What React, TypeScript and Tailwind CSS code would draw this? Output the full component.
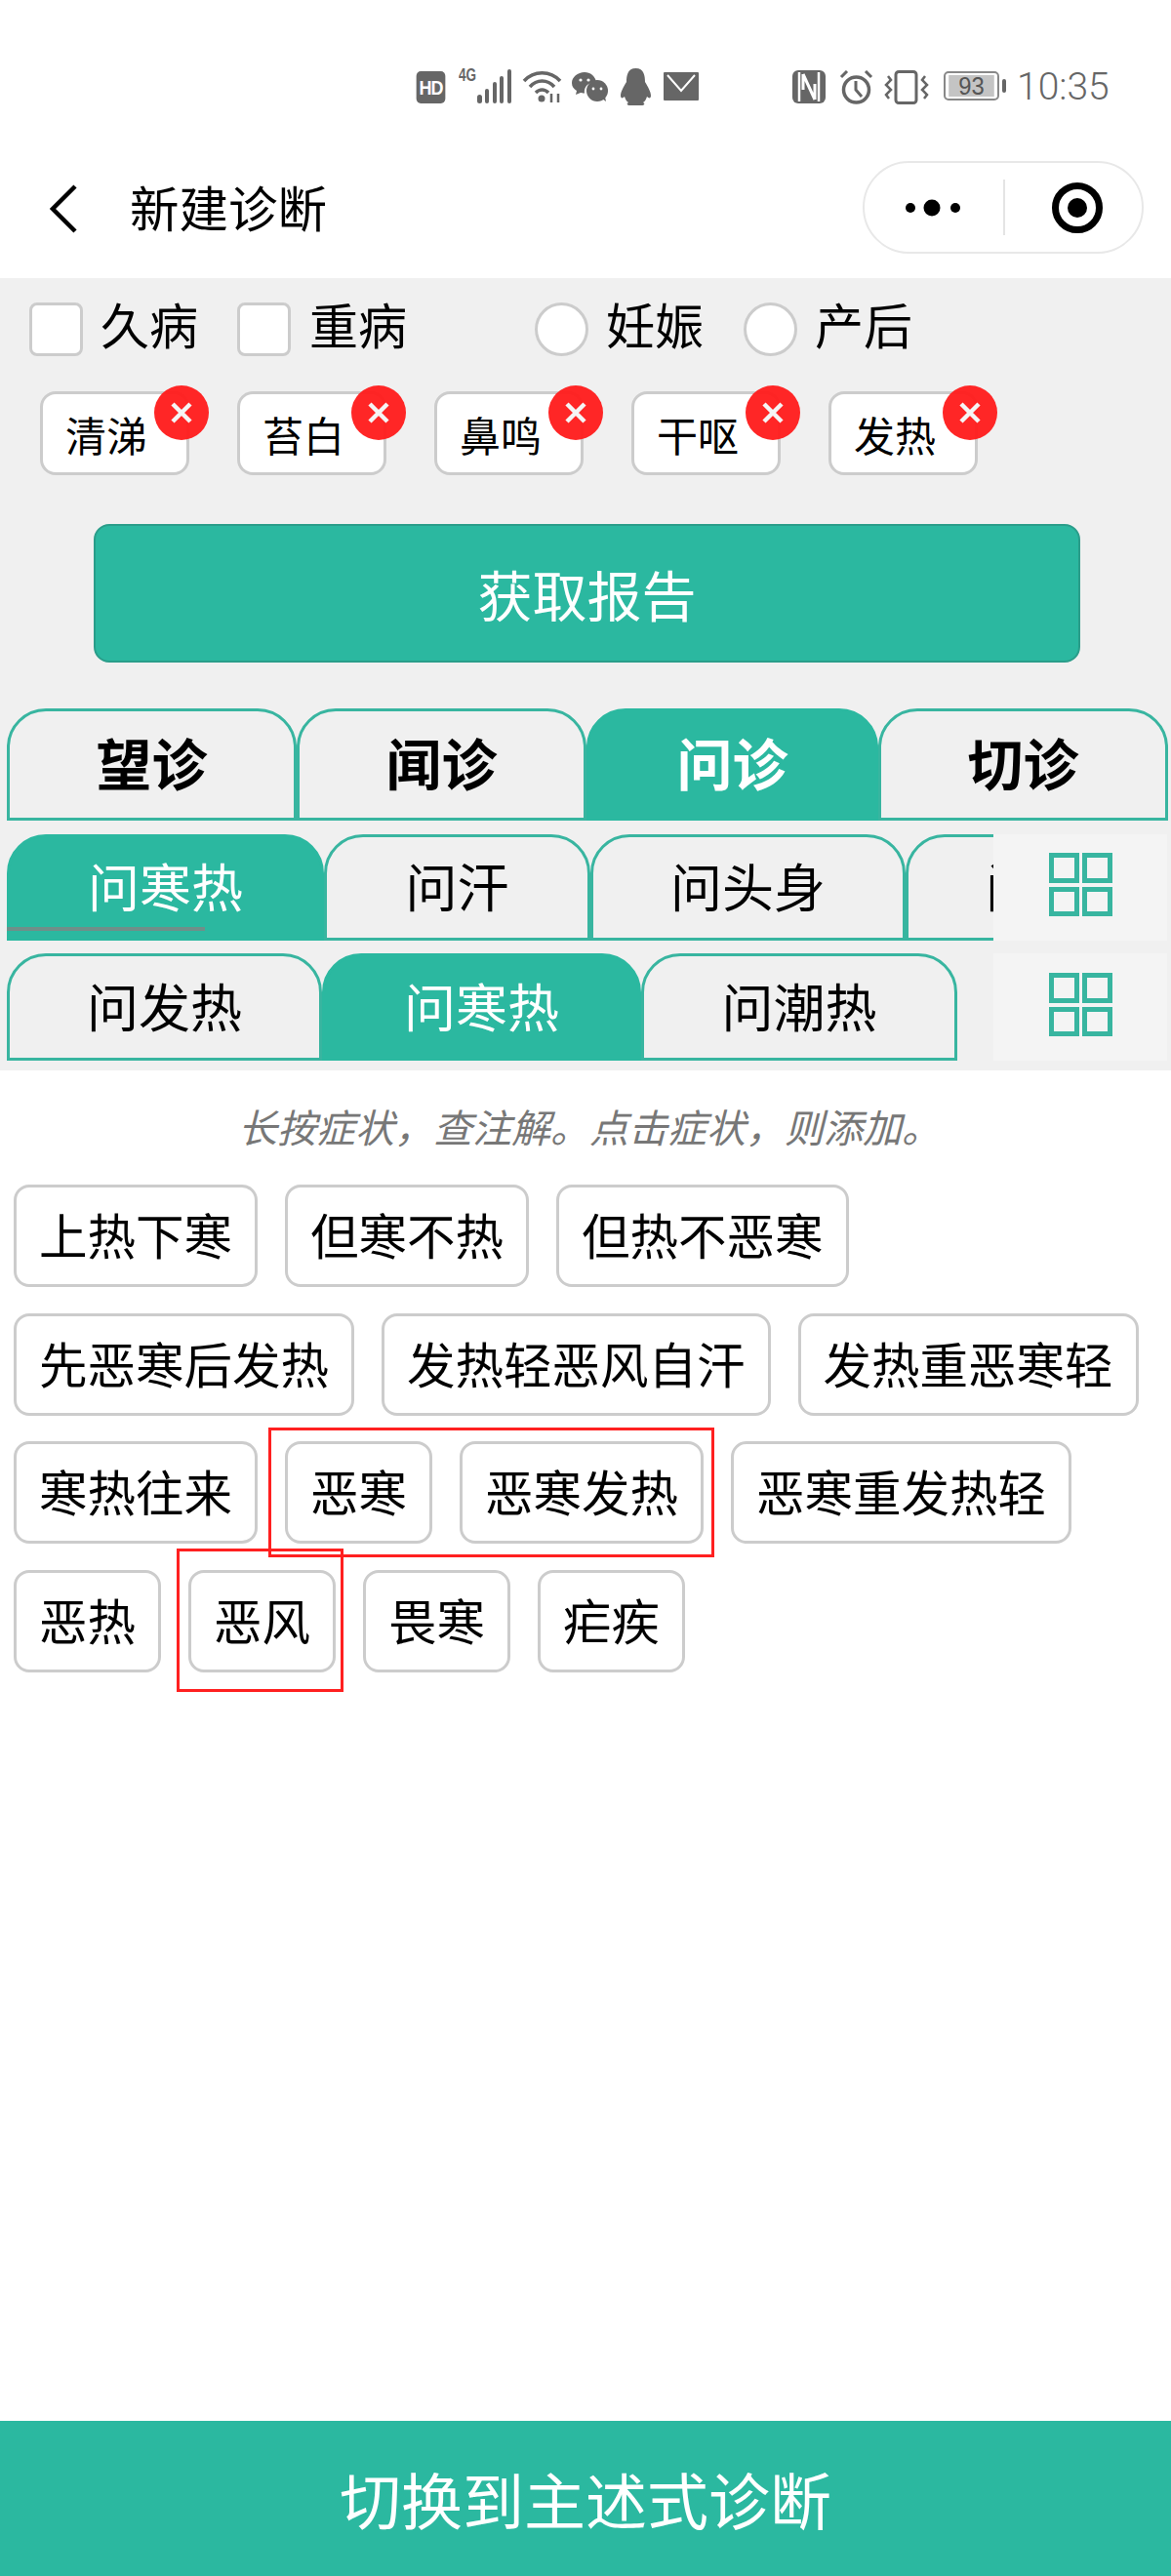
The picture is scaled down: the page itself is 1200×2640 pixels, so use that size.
import React from "react";

function Tab({ label, active, bold, w }: { label: string; active?: boolean; bold?: boolean; w: string }) {
  return (
    <div
      className={`${w} h-full shrink-0 flex items-center justify-center border-[3px] rounded-t-[40px] whitespace-nowrap ${
        active ? "bg-[#2bb8a0] border-[#2bb8a0] text-white" : "border-[#38b5a0] text-black"
      } ${bold ? "font-bold text-[57px] pb-[5px]" : "text-[53px] pb-[3px]"}`}
    >
      {label}
    </div>
  );
}

function GridIcon() {
  return (
    <div className="w-[178px] h-full bg-[#f4f4f4] flex items-center justify-center shrink-0 pb-[6px]">
      <svg width="65" height="65" viewBox="0 0 65 65" fill="none" stroke="#38b5a0" strokeWidth="5">
        <rect x="2.5" y="2.5" width="26" height="26" />
        <rect x="36.5" y="2.5" width="26" height="26" />
        <rect x="2.5" y="37.5" width="26" height="25" />
        <rect x="36.5" y="37.5" width="26" height="25" />
      </svg>
    </div>
  );
}

function Chip({ label }: { label: string }) {
  return (
    <div className="relative w-[153px] h-[86px] bg-white border-[3px] border-[#cccccc] rounded-[16px] flex items-center pl-[23px] text-[42px] text-black">
      {label}
      <div className="absolute left-[114px] top-[-9px] w-[56px] h-[56px] rounded-full bg-[#ff1a1a]/95 flex items-center justify-center">
        <svg width="24" height="24" viewBox="0 0 24 24" stroke="#f5f5f5" strokeWidth="4.5">
          <path d="M3 3 L21 21 M21 3 L3 21" />
        </svg>
      </div>
    </div>
  );
}

function Sym({ label }: { label: string }) {
  return (
    <div className="h-[105px] px-[23px] pb-[2px] bg-white border-[3px] border-[#cccccc] rounded-[16px] flex items-center text-[49.500px] text-black whitespace-nowrap">
      {label}
    </div>
  );
}

function StatusBar() {
  const c = "#666666";
  return (
    <div className="h-[145px] pt-[70px] pl-[425px] flex items-start text-[#666666]">
      <div className="mt-[3px] w-[33px] h-[33px] rounded-[5px] bg-[#666666] text-white text-[20px] font-bold flex items-center justify-center font-['Liberation_Sans'] tracking-[-1px] scale-x-90">
        HD
      </div>
      <div className="ml-[12px] flex items-start w-[55px] relative h-[36px]">
        <span className="text-[18px] font-bold leading-[15px] font-['Liberation_Sans'] scale-x-75 origin-left">4G</span>
        <svg className="absolute left-[19px] top-[1px]" width="36" height="35" viewBox="0 0 36 35" fill={c}>
          <rect x="0" y="26" width="5" height="9" rx="2.5" />
          <rect x="8" y="20" width="4" height="15" rx="2" />
          <rect x="16" y="13" width="4" height="22" rx="2" />
          <rect x="23" y="7" width="4" height="28" rx="2" />
          <rect x="31" y="0" width="4" height="35" rx="2" />
        </svg>
      </div>
      <svg className="ml-[10px] mt-[2px]" width="42" height="34" viewBox="0 0 42 34" fill="none" stroke={c} strokeWidth="3.5">
        <path d="M2 11 C12 0 29 0 39 11" />
        <path d="M8 17 C15 9 26 9 33 17" />
        <path d="M14 23 C18 19 23 19 27 23" />
        <circle cx="20" cy="29" r="3.5" fill={c} stroke="none" />
        <path d="M30 24 V33 M37 24 V33" strokeWidth="2.5" />
      </svg>
      <svg className="ml-[9px] mt-[4px]" width="37" height="30" viewBox="0 0 37 30" fill={c}>
        <path d="M13 0 C6 0 0 5 0 11 C0 15 2 17 5 19 L4 23 L9 21 C10 21 11 21.5 13 21.5 C12 15 17 10 25 10 C24 4 19 0 13 0 Z" />
        <circle cx="26" cy="19" r="11" />
        <path d="M31 27 L35 30 L34 25 Z" />
        <circle cx="9" cy="8" r="1.6" fill="#fff" />
        <circle cx="17" cy="8" r="1.6" fill="#fff" />
        <circle cx="22" cy="17" r="1.4" fill="#fff" />
        <circle cx="30" cy="17" r="1.4" fill="#fff" />
      </svg>
      <svg className="ml-[12px]" width="33" height="38" viewBox="0 0 33 38" fill={c}>
        <path d="M16.500 0 C8 0 7 8 7 14 C4 19 1 24 1 28 C1 31 3 31 5 29 C6 32 7 34 9 35 C7 36 7 38 11 38 H22 C26 38 26 36 24 35 C26 34 27 32 28 29 C30 31 32 31 32 28 C32 24 29 19 26 14 C26 8 25 0 16.500 0 Z" />
      </svg>
      <svg className="ml-[12px] mt-[4px]" width="36" height="29" viewBox="0 0 36 29">
        <rect width="36" height="29" rx="1" fill={c} />
        <path d="M4 3 L18 19 L32 3" fill="none" stroke="#fff" strokeWidth="2" />
      </svg>
      <svg className="ml-[96px] mt-[2px]" width="34" height="34" viewBox="0 0 34 34" fill="none" stroke={c}>
        <rect x="0" y="0" width="34" height="34" rx="6" fill={c} stroke="none" />
        <path d="M7 2 V32" stroke="#fff" strokeWidth="2.500" />
        <path d="M27 2 V32" stroke="#fff" strokeWidth="2.500" />
        <path d="M11 4 L23 30 M11 4 V20 M23 30 V14" stroke="#fff" strokeWidth="3" />
      </svg>
      <svg className="ml-[14px] mt-[2px]" width="35" height="35" viewBox="0 0 35 35" fill="none" stroke={c} strokeWidth="3.500">
        <circle cx="17.500" cy="20" r="13" />
        <path d="M17 11 V20 L23 27" strokeWidth="3" />
        <path d="M2 7 L8 1 M33 7 L27 1" strokeWidth="3" />
      </svg>
      <svg className="ml-[11px] mt-[2px]" width="46" height="35" viewBox="0 0 46 35" fill="none" stroke={c} strokeWidth="3">
        <rect x="12" y="1.500" width="21" height="32" rx="3" />
        <path d="M4 6 L7 10 L2 15 L7 20 L2 25 L5 29" strokeWidth="2.500" />
        <path d="M42 6 L39 10 L44 15 L39 20 L44 25 L41 29" strokeWidth="2.500" />
      </svg>
      <div className="ml-[15px] mt-[3px] w-[57px] h-[30px] border-2 border-[#888888] rounded-[5px] p-[2px] relative">
        <div className="w-full h-full bg-[#c4c4c4] flex items-center justify-center text-[25px] leading-none text-[#555555] font-['Liberation_Sans'] font-light scale-x-95">
          93
        </div>
        <div className="absolute right-[-9px] top-[6px] w-[4px] h-[14px] rounded-[2px] bg-[#666666]" />
      </div>
      <div className="ml-[18px] text-[39px] leading-[36px] mt-[1px] font-['Roboto'] font-light text-[#666666]">10:35</div>
    </div>
  );
}

export default function App() {
  return (
    <div className="w-[1200px] h-[2640px] bg-white flex flex-col relative overflow-hidden font-['Noto_Sans_CJK_SC','Noto_Sans',sans-serif]">
      <StatusBar />
      {/* header */}
      <div className="h-[140px] flex items-start pt-[20px] pr-[28px] relative">
        <svg className="ml-[48px] mt-[24px] shrink-0" width="34" height="50" viewBox="0 0 34 50" fill="none" stroke="#000" strokeWidth="4.500">
          <path d="M29 2 L6 25 L29 48" />
        </svg>
        <div className="ml-[51px] text-[50.500px] leading-[95px] text-black h-[95px] mt-[-1px]">新建诊断</div>
        <div className="ml-auto w-[288px] h-[95px] rounded-[48px] border-2 border-[#e8e8e8] flex items-center relative">
          <svg className="ml-[36px]" width="66" height="20" viewBox="0 0 66 20" fill="#000">
            <circle cx="11" cy="10" r="5" />
            <circle cx="33" cy="10" r="8.500" />
            <circle cx="57" cy="10" r="5" />
          </svg>
          <div className="ml-[40px] w-[2px] h-[57px] bg-[#e4e4e4]" />
          <svg className="ml-[47px]" width="54" height="54" viewBox="0 0 54 54" fill="none">
            <circle cx="27" cy="27" r="22.500" stroke="#000" strokeWidth="7" />
            <circle cx="27" cy="27" r="10" fill="#000" />
          </svg>
        </div>
      </div>

      {/* grey panel */}
      <div className="bg-[#f0f0f0] pt-[25px] pb-[10px]">
        <div className="h-[55px] flex items-center pl-[30px] text-[50px] text-black">
          <div className="w-[55px] h-[55px] bg-white border-[3px] border-[#cccccc] rounded-[8px]" />
          <span className="ml-[18px] leading-[50px] mt-[-14px]">久病</span>
          <div className="ml-[40px] w-[55px] h-[55px] bg-white border-[3px] border-[#cccccc] rounded-[8px]" />
          <span className="ml-[19px] leading-[50px] mt-[-14px]">重病</span>
          <div className="ml-[131px] w-[55px] h-[55px] bg-white border-[3px] border-[#cccccc] rounded-full" />
          <span className="ml-[18px] leading-[50px] mt-[-14px]">妊娠</span>
          <div className="ml-[41px] w-[55px] h-[55px] bg-white border-[3px] border-[#cccccc] rounded-full" />
          <span className="ml-[18px] leading-[50px] mt-[-14px]">产后</span>
        </div>

        <div className="mt-[36px] ml-[41px] flex gap-x-[49px]">
          <Chip label="清涕" />
          <Chip label="苔白" />
          <Chip label="鼻鸣" />
          <Chip label="干呕" />
          <Chip label="发热" />
        </div>

        <div className="mt-[50px] ml-[96px] w-[1011px] h-[142px] rounded-[16px] bg-[#2bb8a0] border-2 border-[#2a9d8a] flex items-center justify-center text-white text-[56px]">
          获取报告
        </div>

        <div className="mt-[47px] px-[7px] h-[115px] flex">
          <Tab label="望诊" bold w="w-[297px]" />
          <Tab label="闻诊" bold w="w-[297px]" />
          <Tab label="问诊" bold active w="w-[299px]" />
          <Tab label="切诊" bold w="w-[297px]" />
        </div>

        <div className="mt-[14px] pl-[7px] pr-[4px] h-[109px] flex">
          <div className="flex-1 flex overflow-hidden h-full relative">
            <Tab label="问寒热" active w="w-[325px]" />
            <Tab label="问汗" w="w-[273px]" />
            <Tab label="问头身" w="w-[323px]" />
            <Tab label="问饮食" w="w-[323px]" />
            <div className="absolute left-0 top-[95px] w-[203px] h-[4px] bg-[#6f8f89]" />
          </div>
          <GridIcon />
        </div>

        <div className="mt-[13px] pl-[7px] pr-[4px] h-[110px] flex">
          <div className="flex-1 flex h-full">
            <Tab label="问发热" w="w-[323px]" />
            <Tab label="问寒热" active w="w-[327px]" />
            <Tab label="问潮热" w="w-[324px]" />
          </div>
          <GridIcon />
        </div>
      </div>

      {/* hint */}
      <div className="h-[117px] flex items-center pl-[244px] pb-[3px] text-[40px] italic text-[#777777] whitespace-nowrap">
        长按症状，查注解。点击症状，则添加。
      </div>

      {/* symptoms */}
      <div className="px-[14px] flex flex-col gap-y-[26.500px]">
        <div className="flex gap-x-[28px]">
          <Sym label="上热下寒" />
          <Sym label="但寒不热" />
          <Sym label="但热不恶寒" />
        </div>
        <div className="flex gap-x-[28px]">
          <Sym label="先恶寒后发热" />
          <Sym label="发热轻恶风自汗" />
          <Sym label="发热重恶寒轻" />
        </div>
        <div className="flex gap-x-[28px]">
          <Sym label="寒热往来" />
          <Sym label="恶寒" />
          <Sym label="恶寒发热" />
          <Sym label="恶寒重发热轻" />
        </div>
        <div className="flex gap-x-[28px]">
          <Sym label="恶热" />
          <Sym label="恶风" />
          <Sym label="畏寒" />
          <Sym label="疟疾" />
        </div>
      </div>

      {/* red annotation boxes */}
      <div className="absolute left-[275px] top-[1463px] w-[457px] h-[133px] border-[3px] border-[#ff2020]" />
      <div className="absolute left-[181px] top-[1587px] w-[171px] h-[147px] border-[3px] border-[#ff2020]" />

      {/* bottom */}
      <div className="mt-auto h-[159px] bg-[#2bb8a0] flex items-center justify-center text-white text-[63px]">
        切换到主述式诊断
      </div>
    </div>
  );
}
